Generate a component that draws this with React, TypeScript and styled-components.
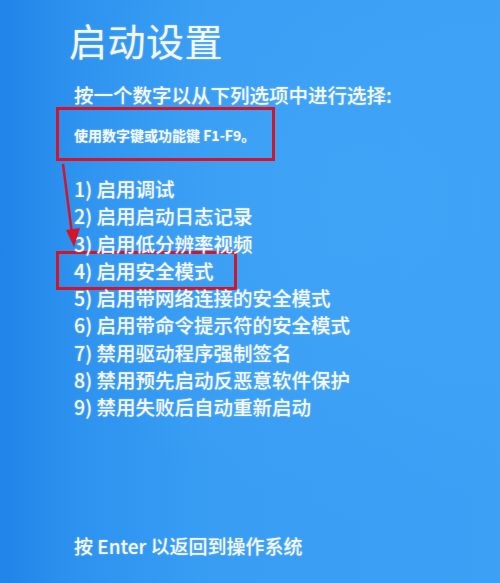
import * as React from "react";
import styled, { createGlobalStyle } from "styled-components";

const GlobalStyle = createGlobalStyle`
    html, body {
        margin: 0;
        padding: 0;
    }
    body {
        font-family: "Noto Sans CJK SC", "Noto Sans", sans-serif;
    }
`;

const Screen = styled.div`
    position: relative;
    width: 500px;
    height: 583px;
    box-sizing: border-box;
    padding: 17px 0 25px 74px;
    display: flex;
    flex-direction: column;
    overflow: hidden;
    color: #f3f8fd;
    text-shadow: 0 0 2px rgba(255, 255, 255, 0.4);
    background:
        radial-gradient(ellipse at 70% 35%, rgba(72, 172, 250, 0.4), transparent 60%),
        linear-gradient(90deg, #2084e8 0%, #2e93ef 16%, #389df3 42%, #3ca1f5 100%);
`;

const Title = styled.h1`
    margin: 0 0 20px -5px;
    font-size: 38px;
    line-height: 46px;
    font-weight: 400;
    letter-spacing: 0.5px;
`;

const Prompt = styled.div`
    font-size: 19.5px;
    line-height: 24px;
    font-weight: 500;
`;

const Highlight = styled.div<{ $width: number }>`
    width: ${(p) => p.$width}px;
    box-sizing: border-box;
    margin-left: -18px;
    padding-left: 15px;
    border: 3px solid #d3152c;
`;

const HintBox = styled(Highlight)`
    height: 54px;
    padding-top: 16px;
`;

const Hint = styled.div`
    font-size: 14px;
    line-height: 18px;
    font-weight: 700;
`;

const Options = styled.ol`
    list-style: none;
    margin: 14px 0 0;
    padding: 0;
`;

const Option = styled.li`
    font-size: 19.5px;
    line-height: 27.3px;
    font-weight: 500;
    white-space: nowrap;
`;

const OptionBox = styled(Highlight)`
    margin-top: -6px;
    margin-bottom: -6px;
    padding-top: 3px;
    padding-bottom: 3px;
`;

const Footer = styled.div`
    margin-top: auto;
    font-size: 19px;
    line-height: 24px;
    font-weight: 500;
`;

const Arrow = styled.svg`
    position: absolute;
    left: 0;
    top: 0;
    pointer-events: none;
`;

const options = [
    "启用调试",
    "启用启动日志记录",
    "启用低分辨率视频",
    "启用安全模式",
    "启用带网络连接的安全模式",
    "启用带命令提示符的安全模式",
    "禁用驱动程序强制签名",
    "禁用预先启动反恶意软件保护",
    "禁用失败后自动重新启动",
];

export default function App() {
    return (
        <>
            <GlobalStyle />
            <Screen>
                <Title>启动设置</Title>
                <Prompt>按一个数字以从下列选项中进行选择:</Prompt>
                <HintBox $width={219}>
                    <Hint>使用数字键或功能键 F1-F9。</Hint>
                </HintBox>
                <Options>
                    {options.map((text, i) =>
                        i === 3 ? (
                            <Option key={text}>
                                <OptionBox $width={181}>
                                    {i + 1}) {text}
                                </OptionBox>
                            </Option>
                        ) : (
                            <Option key={text}>
                                {i + 1}) {text}
                            </Option>
                        )
                    )}
                </Options>
                <Footer>按 Enter 以返回到操作系统</Footer>
                <Arrow width="500" height="583" viewBox="0 0 500 583">
                    <line x1="63" y1="164" x2="72" y2="234" stroke="#d3152c" strokeWidth="2.5" />
                    <polygon points="66,230 80,228 74,247" fill="#d3152c" />
                </Arrow>
            </Screen>
        </>
    );
}
